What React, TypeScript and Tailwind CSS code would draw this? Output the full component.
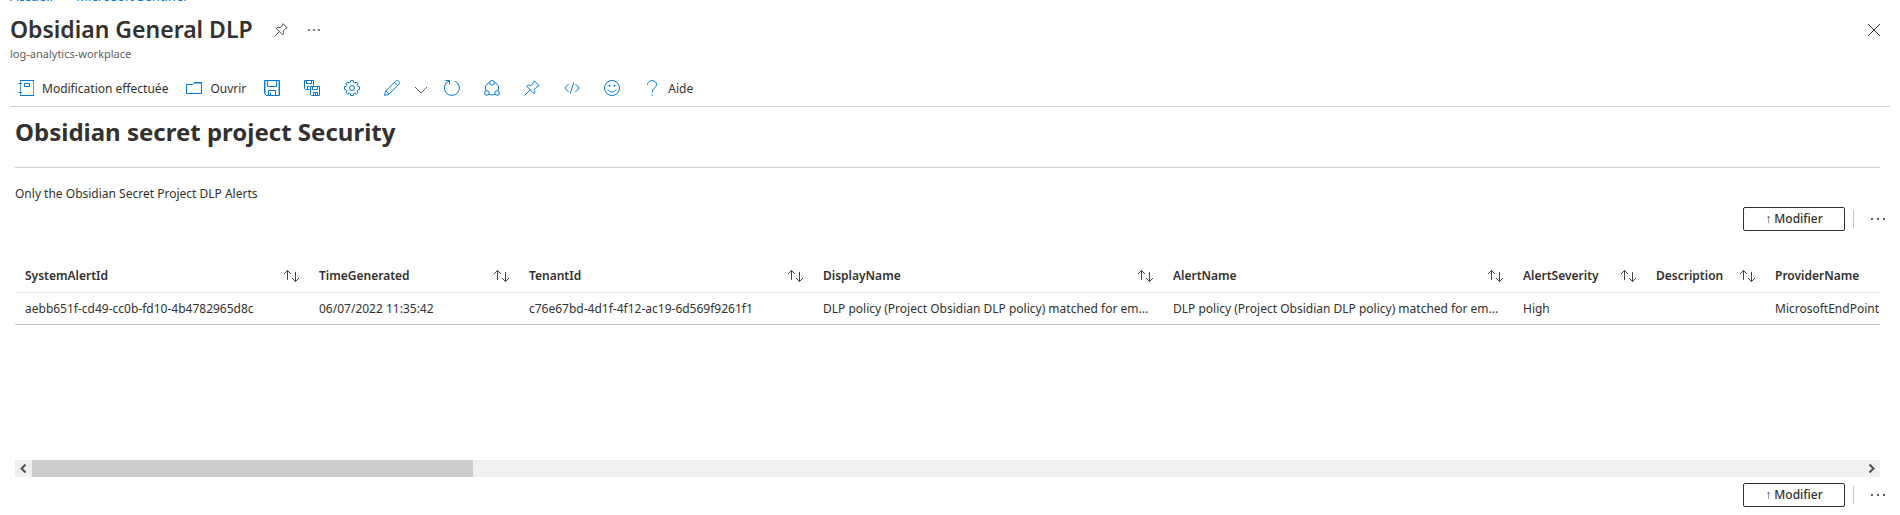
import type { ReactNode } from "react";

type IconProps = { children: ReactNode; className?: string };

function Icon({ children, className = "text-[#0078d4]" }: IconProps) {
  return (
    <svg
      viewBox="0 0 16 16"
      className={"size-4 shrink-0 " + className}
      fill="none"
      stroke="currentColor"
      strokeWidth="1"
      aria-hidden="true"
    >
      {children}
    </svg>
  );
}

const pinPath = (
  <path d="M.7 15.300 5.900 10.100M10.300.8l4.900 4.900-1.500.3-3.300 3.300c.7 1.600.5 3-.5 4.200L2.500 6.100c1.200-1 2.600-1.200 4.200-.5L10 2.300z" strokeLinejoin="round" />
);

const notebookIcon = (
  <>
    <path d="M2.500.5v15M15.500.5v15" opacity=".7" />
    <path d="M2 .5h14M2 15.500h14M6.500 3.500h5v3h-5zM.5 3.500h3.500M.5 12.500h3.500" />
  </>
);
const folderIcon = <path d="M.5 4.500h6l2-1.500h7v10.500H.5zM8.500 3.500v-1h7v2" />;
const saveIcon = (
  <>
    <path d="M.5.5h15v15h-13l-2-2zM3.500.5v6h9v-6M4.500 15.500v-5h7v5M6.500 12.500v3" />
    <path d="M1.500 1v12.500M14.500 1v14" opacity=".45" />
  </>
);
const saveAllIcon = (
  <>
    <path d="M5.500 9.500h-4l-1-1v-8h9v5M2.500.5v3h5v-3M3.500 9.500v-3h2" />
    <path d="M6.500 6.500h9v9h-8l-1-1zM8.500 6.500v3h5v-3M9.500 15.500v-3h4v3M11.500 13v2.500" />
  </>
);
const gearIcon = (
  <>
    <path
      d="M6.700.6h2.600l.4 1.900 1.100.5 1.600-1.100 1.800 1.800-1.100 1.600.5 1.100 1.900.4v2.600l-1.900.4-.5 1.100 1.100 1.600-1.800 1.800-1.600-1.100-1.100.5-.4 1.900H6.700l-.4-1.900-1.100-.5-1.600 1.100-1.800-1.800 1.100-1.600-.5-1.100L.5 9.300V6.700l1.900-.4.5-1.100-1.100-1.600 1.800-1.800 1.600 1.100 1.100-.5z"
      strokeLinejoin="round"
    />
    <circle cx="8" cy="8" r="2.500" />
  </>
);
const pencilIcon = (
  <path d="m.6 15.400 1-4.200L11.800 1c1.800-1.500 4.700 1.400 3.200 3.200L4.800 14.400zM10.500 2.300l3.200 3.200M1.600 11.200c1.700.2 3 1.500 3.200 3.200" strokeLinejoin="round" />
);
const refreshIcon = <path d="M1.500.5h4v4M5.300.9A7.500 7.500 0 1 0 10.700 1" />;
const shareIcon = (
  <>
    <path d="M5.600 2.300A6.500 6.500 0 0 0 1.700 10.500M10.400 2.300a6.500 6.500 0 0 1 3.900 8.200M5 14.200c2 .9 4 .9 6 0" />
    <circle cx="8" cy="2.800" r="2.300" />
    <circle cx="2.900" cy="12.900" r="2.300" />
    <circle cx="13.100" cy="12.900" r="2.300" />
  </>
);
const codeIcon = <path d="M4.500 4 .8 8l3.700 4M11.500 4l3.700 4-3.700 4M9.700 2.500l-3.400 11" />;
const smileIcon = (
  <>
    <circle cx="8" cy="8" r="7.500" />
    <path d="M4 9.500c1.300 3.400 6.700 3.400 8 0" />
    <circle cx="5.500" cy="5.800" r="1" fill="currentColor" stroke="none" />
    <circle cx="10.500" cy="5.800" r="1" fill="currentColor" stroke="none" />
  </>
);
const helpIcon = (
  <path d="M3.500 4.800C3.500-.8 12.500-.8 12.500 4.600c0 3.400-4.500 3.600-4.500 7.900M8 14.500V16" />
);

function Dots({ wide = false }: { wide?: boolean }) {
  return (
    <svg viewBox="0 0 16 16" className="size-4" fill="#605e5c" aria-hidden="true">
      {wide ? (
        <path d="M1 7h2v2H1zM7 7h2v2H7zM13 7h2v2h-2z" />
      ) : (
        <path d="M3 7h2v2H3zM8 7h2v2H8zM13 7h2v2h-2z" opacity=".8" />
      )}
    </svg>
  );
}

function SortIcon() {
  return (
    <svg viewBox="0 0 16 16" className="size-4" fill="none" stroke="#484644" aria-hidden="true">
      <path d="M4.500 12V2.500M1 6l3.500-3.500L8 6M12.500 4v9.500M9 10l3.500 3.500L16 10" />
    </svg>
  );
}

function EditBar() {
  return (
    <div className="flex h-6 items-center justify-end pr-3.5">
      <button className="flex h-6 w-[102px] items-center justify-center rounded-xs border border-[#323130] text-[12px] font-medium">
        ↑ Modifier
      </button>
      <span className="ml-2 h-[18px] w-px bg-[#c8c6c4]" />
      <button aria-label="Plus d’options" className="ml-4">
        <Dots wide />
      </button>
    </div>
  );
}

const tools: [string, ReactNode][] = [
  ["Enregistrer", saveIcon],
  ["Enregistrer sous", saveAllIcon],
  ["Paramètres", gearIcon],
];
const moreTools: [string, ReactNode][] = [
  ["Actualiser", refreshIcon],
  ["Partager", shareIcon],
  ["Épingler", pinPath],
  ["Éditeur avancé", codeIcon],
  ["Commentaires", smileIcon],
];

const columns: [string, string][] = [
  ["SystemAlertId", "aebb651f-cd49-cc0b-fd10-4b4782965d8c"],
  ["TimeGenerated", "06/07/2022 11:35:42"],
  ["TenantId", "c76e67bd-4d1f-4f12-ac19-6d569f9261f1"],
  ["DisplayName", "DLP policy (Project Obsidian DLP policy) matched for em..."],
  ["AlertName", "DLP policy (Project Obsidian DLP policy) matched for em..."],
  ["AlertSeverity", "High"],
  ["Description", ""],
  ["ProviderName", "MicrosoftEndPoint"],
];

export default function App() {
  return (
    <div className="overflow-hidden bg-white font-['Noto_Sans',sans-serif] text-[12px] text-[#323130]">
      <nav className="-mt-3 flex h-4 items-end gap-2 pl-2.5 text-[13px] leading-4 text-[#0078d4]">
        <a href="#accueil">Accueil</a>
        <span className="text-[#605e5c]">&gt;</span>
        <a href="#sentinel">Microsoft Sentinel</a>
        <span className="text-[#605e5c]">&gt;</span>
      </nav>

      <header className="flex justify-between pt-2.5 pr-5 pl-2.5">
        <div>
          <div className="flex h-8 items-center">
            <h1 className="pb-0.5 text-[23px] leading-8 font-semibold">Obsidian General DLP</h1>
            <button aria-label="Épingler au tableau de bord" className="ml-5">
              <svg viewBox="0 0 16 16" className="size-4 p-px" fill="none" stroke="#323130" aria-hidden="true">
                {pinPath}
              </svg>
            </button>
            <button aria-label="Plus" className="ml-4">
              <Dots />
            </button>
          </div>
          <p className="h-4 text-[11px] leading-4 text-[#605e5c]">log-analytics-workplace</p>
        </div>
        <button aria-label="Fermer" className="flex h-8 items-center">
          <svg viewBox="0 0 12 12" className="size-3" fill="none" stroke="#323130" aria-hidden="true">
            <path d="m0 0 12 12M12 0 0 12" />
          </svg>
        </button>
      </header>

      <div role="toolbar" className="mx-2.5 mt-2 flex h-[37px] items-center border-b border-[#d2d0ce] pl-2">
        <div className="flex items-center gap-[18px]">
          <button className="flex items-center gap-2">
            <Icon>{notebookIcon}</Icon>
            <span className="pt-0.5">Modification effectuée</span>
          </button>
          <button className="flex items-center gap-2">
            <Icon>{folderIcon}</Icon>
            <span className="pt-0.5">Ouvrir</span>
          </button>
        </div>
        <div className="ml-[18px] flex items-center gap-6">
          {tools.map(([label, icon]) => (
            <button key={label} aria-label={label}>
              <Icon>{icon}</Icon>
            </button>
          ))}
          <button aria-label="Modifier" className="flex items-center gap-3.5">
            <Icon>{pencilIcon}</Icon>
            <svg viewBox="0 0 14 16" className="h-4 w-3.5" fill="none" stroke="#605e5c" aria-hidden="true">
              <path d="m1 7 6 6 6-6" />
            </svg>
          </button>
        </div>
        <div className="ml-4 flex items-center gap-6">
          {moreTools.map(([label, icon]) => (
            <button key={label} aria-label={label}>
              <Icon>{icon}</Icon>
            </button>
          ))}
          <button className="flex items-center gap-2">
            <Icon>{helpIcon}</Icon>
            <span className="pt-0.5">Aide</span>
          </button>
        </div>
      </div>

      <main className="pl-[15px]">
        <div className="mr-5 border-b border-[#d2d0ce] pt-[9px] pb-[19px]">
          <h2 className="text-[24px] leading-8 font-bold">Obsidian secret project Security</h2>
        </div>
        <p className="mt-[18px] leading-4">Only the Obsidian Secret Project DLP Alerts</p>
        <div className="mt-[5px]">
          <EditBar />
        </div>

        <div className="mt-7 mr-5 h-[201px] overflow-hidden">
          <table className="w-[1980px] table-fixed border-collapse text-left text-[12px]">
            <colgroup>
              <col className="w-[294px]" />
              <col className="w-[210px]" />
              <col className="w-[294px]" />
              <col className="w-[350px]" />
              <col className="w-[350px]" />
              <col className="w-[133px]" />
              <col className="w-[119px]" />
              <col />
            </colgroup>
            <thead>
              <tr className="h-[33px] border-b border-[#e8e8e8]">
                {columns.map(([name]) => (
                  <th key={name} className="px-2.5 pt-0.5 font-semibold">
                    <button className="flex w-full items-center justify-between">
                      {name}
                      <SortIcon />
                    </button>
                  </th>
                ))}
              </tr>
            </thead>
            <tbody>
              <tr className="h-8 border-b border-[#c8c6c4]">
                {columns.map(([name, value]) => (
                  <td key={name} className="pt-0.5 pl-2.5 whitespace-nowrap">
                    {value}
                  </td>
                ))}
              </tr>
            </tbody>
          </table>
        </div>

        <div className="mr-5 flex h-[17px] bg-[#f0f0f0]">
          <button aria-label="Défiler à gauche" className="w-[17px]">
            <svg viewBox="0 0 17 17" className="size-[17px]" fill="none" stroke="#505050" strokeWidth="2" aria-hidden="true">
              <path d="m10.500 4.500-4 4 4 4" />
            </svg>
          </button>
          <div className="flex-1">
            <div className="h-full w-[24.1%] bg-[#cdcdcd]" />
          </div>
          <button aria-label="Défiler à droite" className="w-[17px]">
            <svg viewBox="0 0 17 17" className="size-[17px]" fill="none" stroke="#505050" strokeWidth="2" aria-hidden="true">
              <path d="m6.500 4.500 4 4-4 4" />
            </svg>
          </button>
        </div>
        <div className="mt-1.5 pb-2">
          <EditBar />
        </div>
      </main>
    </div>
  );
}
